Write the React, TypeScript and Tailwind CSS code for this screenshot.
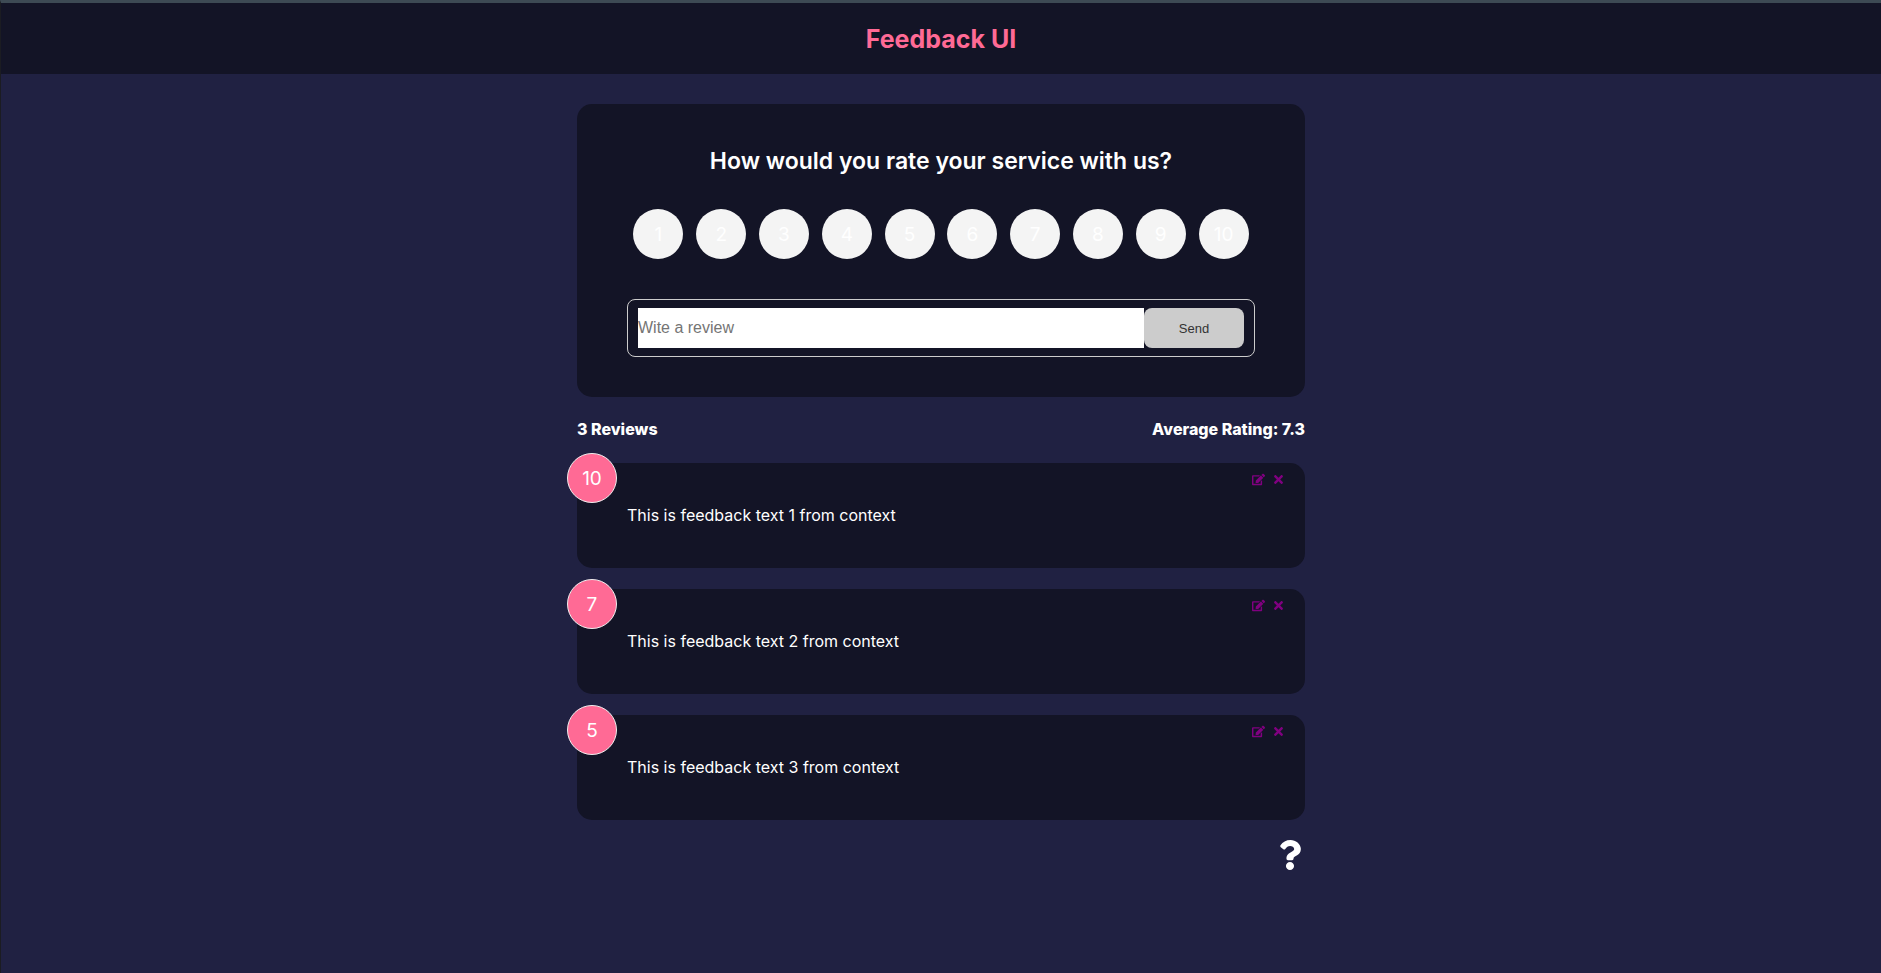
import { useState } from "react";
import { FaEdit, FaQuestion, FaTimes } from "react-icons/fa";

const scores = [1, 2, 3, 4, 5, 6, 7, 8, 9, 10];

const initialFeedback = [
  { id: 1, rating: 10, text: "This is feedback text 1 from context" },
  { id: 2, rating: 7, text: "This is feedback text 2 from context" },
  { id: 3, rating: 5, text: "This is feedback text 3 from context" },
];

function Header() {
  return (
    <header className="flex h-[71px] items-center justify-center bg-[#131426]">
      <h1 className="text-[25px] leading-[38px] font-bold text-[#ff6a95]">
        <a href="#">Feedback UI</a>
      </h1>
    </header>
  );
}

function RatingSelect({ selected, onSelect }: { selected: number; onSelect: (n: number) => void }) {
  return (
    <ul className="mt-[30px] mb-10 flex justify-around">
      {scores.map((n) => (
        <li key={n}>
          <label
            className={
              "flex size-[50px] cursor-pointer items-center justify-center rounded-full text-[19px] text-white " +
              (selected === n ? "bg-[#ff6a95]" : "bg-[#f4f4f4]")
            }
          >
            <input
              type="radio"
              name="rating"
              value={n}
              checked={selected === n}
              onChange={() => onSelect(n)}
              className="sr-only"
            />
            {n}
          </label>
        </li>
      ))}
    </ul>
  );
}

function FeedbackForm() {
  const [rating, setRating] = useState(0);
  const [text, setText] = useState("");
  return (
    <form
      className="relative rounded-[15px] bg-[#131426] px-[50px] py-10"
      onSubmit={(e) => e.preventDefault()}
    >
      <h2 className="text-center text-[23px] leading-[35px] font-semibold">
        How would you rate your service with us?
      </h2>
      <RatingSelect selected={rating} onSelect={setRating} />
      <div className="flex rounded-lg border border-[#cccccc] px-[10px] py-2 font-['Liberation_Sans',sans-serif]">
        <input
          type="text"
          aria-label="Review"
          placeholder="Wite a review"
          value={text}
          onChange={(e) => setText(e.target.value)}
          className="h-10 min-w-0 grow bg-white text-base text-black outline-none placeholder:text-[#757575]"
        />
        <button type="submit" className="h-10 w-[100px] rounded-lg bg-[#cccccc] text-[13px] text-[#333333]">
          Send
        </button>
      </div>
    </form>
  );
}

export default function App() {
  const [feedback, setFeedback] = useState(initialFeedback);
  const average = feedback.length
    ? feedback.reduce((sum, item) => sum + item.rating, 0) / feedback.length
    : 0;

  return (
    <div className="min-h-screen border-t-3 border-l border-t-[#3d4a54] border-l-[#1b1c22] bg-[#202142] font-[Inter,sans-serif] text-base leading-[25px] text-white">
      <Header />
      <main className="mx-auto max-w-3xl px-5 pt-[30px]">
        <FeedbackForm />
        <div className="flex justify-between pt-5 pb-[21px] font-extrabold">
          <h4>{feedback.length} Reviews</h4>
          <h4>Average Rating: {average.toFixed(1).replace(/[.,]0$/, "")}</h4>
        </div>
        <ul className="flex flex-col gap-[21px]">
          {feedback.map((item) => (
            <li key={item.id} className="relative rounded-[15px] bg-[#131426] px-[50px] py-10">
              <div className="absolute -top-[10px] -left-[10px] flex size-[50px] items-center justify-center rounded-full border border-[#eeeeee] bg-[#ff6a95] text-[19px]">
                {item.rating}
              </div>
              <div className="absolute top-[10px] right-5 flex gap-[7px] text-[13px] text-[#800080]">
                <button type="button" aria-label="Edit review">
                  <FaEdit />
                </button>
                <button
                  type="button"
                  aria-label="Delete review"
                  onClick={() => setFeedback(feedback.filter((f) => f.id !== item.id))}
                >
                  <FaTimes />
                </button>
              </div>
              <p>{item.text}</p>
            </li>
          ))}
        </ul>
        <div className="mt-5 flex justify-end">
          <a href="#about" aria-label="About" className="text-[30px]">
            <FaQuestion />
          </a>
        </div>
      </main>
    </div>
  );
}
